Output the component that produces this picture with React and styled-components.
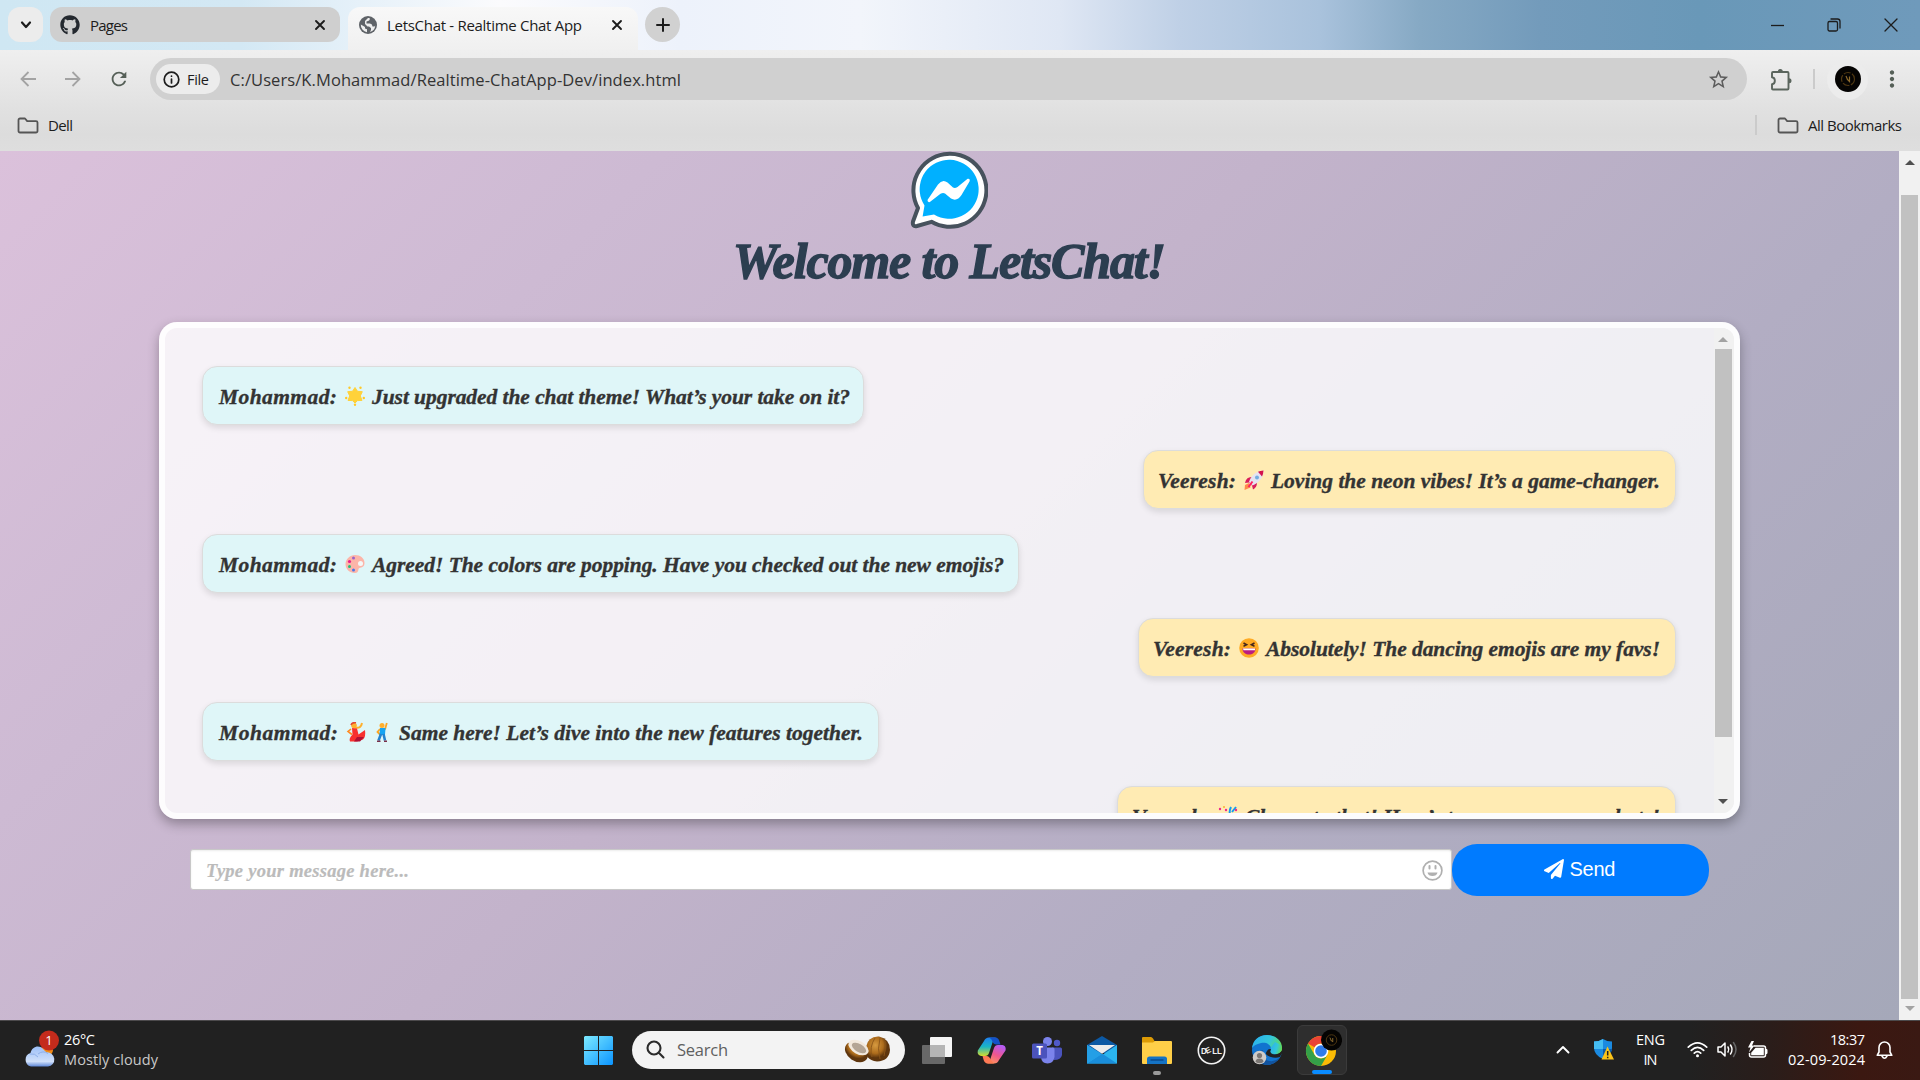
import React, { useLayoutEffect, useRef, useState } from "react";
import styled, { createGlobalStyle, css } from "styled-components";
import { FaGithub, FaPaperPlane } from "react-icons/fa";
import { MdRefresh, MdStarBorder, MdMoreVert } from "react-icons/md";

const UI = `"Open Sans", "Noto Sans", sans-serif`;
const SCRIPT = `"Liberation Serif", serif`;

const Global = createGlobalStyle`
  * { box-sizing: border-box; }
  body { margin: 0; overflow: hidden; font-family: ${UI}; color: #1f1f1f; }
  svg { display: block; flex: none; }
`;

/* ---------- fitted text ---------- */

const FitBox = styled.span`
  display: block;
  flex: none;
  width: ${(p) => p.$w}px;
  white-space: nowrap;
  text-align: left;
`;

function Fit({ w, children }) {
  const ref = useRef(null);
  const [spacing, setSpacing] = useState(0);
  useLayoutEffect(() => {
    const natural = ref.current.getBoundingClientRect().width;
    setSpacing((w - natural) / Math.max(1, String(children).length - 1));
  }, []);
  return (
    <FitBox $w={w}>
      <span ref={ref} style={{ letterSpacing: spacing }}>{children}</span>
    </FitBox>
  );
}

/* ---------- browser chrome ---------- */

const Screen = styled.div`
  width: 1920px;
  height: 1080px;
  display: flex;
  flex-direction: column;
  overflow: hidden;
`;

const TabStrip = styled.div`
  height: 50px;
  flex: none;
  display: flex;
  align-items: flex-start;
  padding: 7px 0 0 8px;
  background: linear-gradient(90deg, #cfe7f3 0, #d3e8f4 240px, #e6f1f9 360px, #fbfbfd 500px, #edf2fb 680px, #f2f5fb 860px, #dfe7f4 1060px, #bfd0e6 1180px, #a9c2dc 1320px, #86a9c4 1420px, #739bbb 1540px, #6998b8 1700px, #6f9abb 1920px);
`;

const StripButton = styled.div`
  width: 35px;
  height: 35px;
  border-radius: ${(p) => (p.$round ? "50%" : "12px")};
  background: ${(p) => (p.$round ? "#d1d1d1" : "#ececec")};
  display: flex;
  align-items: center;
  justify-content: center;
`;

const Tab = styled.div`
  display: flex;
  align-items: center;
  font-size: 15px;
  color: #1c1c1c;
  ${(p) =>
    p.$active
      ? css`
          width: 290px;
          height: 43px;
          margin: 0 7px 0 8px;
          padding: 0 15px 8px 11px;
          border-radius: 12px 12px 0 0;
          background: linear-gradient(#f8f8f8, #f0f0f0);
        `
      : css`
          width: 290px;
          height: 35px;
          margin-left: 7px;
          padding: 0 14px 0 10px;
          border-radius: 12px;
          background: #cfcfcf;
        `}
`;

const TabTitle = styled.div`
  flex: 1;
  margin-left: ${(p) => p.$gap}px;
`;

const WindowButtons = styled.div`
  margin-left: auto;
  display: flex;
  align-items: center;
  gap: 43px;
  height: 35px;
  padding-right: 22px;
`;

const Toolbar = styled.div`
  height: 58px;
  flex: none;
  display: flex;
  align-items: center;
  padding: 0 15px 0 20px;
  background: linear-gradient(#efefef, #e1e1e1);
`;

const NavIcons = styled.div`
  display: flex;
  align-items: center;
  gap: 27px;
  width: 130px;
`;

const AddressBar = styled.div`
  width: 1597px;
  height: 42px;
  border-radius: 21px;
  background: #d0d0d0;
  display: flex;
  align-items: center;
  padding: 0 17px 0 6px;
  font-size: 16.5px;
  color: #333;
`;

const FileChip = styled.div`
  width: 64px;
  height: 30px;
  border-radius: 15px;
  background: #ececec;
  display: flex;
  align-items: center;
  padding-left: 7px;
  gap: 7px;
  margin-right: 10px;
  font-size: 14.5px;
  color: #1c1c1c;
`;

const Push = styled.div`
  margin-left: auto;
`;

const Divider = styled.div`
  width: 2px;
  height: 20px;
  background: #cbcbcb;
  margin: ${(p) => p.$m};
`;

const Extensions = styled.div`
  margin: 0 18px 0 23px;
`;

const AvatarHalo = styled.div`
  width: 41px;
  height: 41px;
  border-radius: 50%;
  background: #ececec;
  display: flex;
  align-items: center;
  justify-content: center;
  margin-right: 11px;
`;

const BookmarkBar = styled.div`
  height: 43px;
  flex: none;
  display: flex;
  align-items: center;
  padding: 0 18px 9px 17px;
  background: linear-gradient(#e1e1e1, #dcdcdc 60%, #dedede);
  font-size: 15px;
  color: #1c1c1c;
`;

const Bookmark = styled.div`
  display: flex;
  align-items: center;
  gap: 9px;
`;

/* ---------- page ---------- */

const Viewport = styled.div`
  flex: 1;
  min-height: 0;
  display: flex;
`;

const Page = styled.main`
  width: 1899px;
  display: flex;
  flex-direction: column;
  align-items: center;
  background: linear-gradient(135deg, #dbc1db 0%, #cdbad3 24%, #c3b3cb 46%, #b2adc3 70%, #a5a8b9 100%);
`;

const Logo = styled.div`
  margin-right: 1px;
`;

const Heading = styled.h1`
  margin: 0;
  height: 93px;
  font: italic bold 50px/64px ${SCRIPT};
  color: #2c3e50;
  -webkit-text-stroke: 1.4px #2c3e50;
`;

const ChatBox = styled.section`
  width: 1581px;
  height: 497px;
  flex: none;
  display: flex;
  border: 6px solid rgba(255, 255, 255, 0.8);
  border-radius: 18px;
  background: rgba(255, 255, 255, 0.8);
  box-shadow: 0 5px 12px rgba(0, 0, 0, 0.3);
  overflow: hidden;
`;

const MessageList = styled.div`
  flex: 1;
  height: 485px;
  padding: 38px 38px 0 37px;
  display: flex;
  flex-direction: column;
  gap: 25px;
  overflow: hidden;
`;

const Bubble = styled.div`
  width: ${(p) => p.$w}px;
  height: 59px;
  flex: none;
  align-self: ${(p) => (p.$own ? "flex-end" : "flex-start")};
  display: flex;
  align-items: center;
  padding: 2px 0 0 ${(p) => (p.$own ? 14 : 16)}px;
  border: 1px solid #dcdcdc;
  border-radius: 15px;
  background: ${(p) => (p.$own ? "#ffebb3" : "#dff6f8")};
  box-shadow: 0 3px 6px rgba(0, 0, 0, 0.11);
  font: italic bold 21.5px/28px ${SCRIPT};
  color: #333;
  -webkit-text-stroke: 0.35px #333;
`;

const Emojis = styled.div`
  display: flex;
  gap: 6px;
  margin: 0 7px 2px 8px;
`;

const Scrollbar = styled.div`
  width: ${(p) => p.$w}px;
  flex: none;
  display: flex;
  flex-direction: column;
  align-items: center;
  padding-right: ${(p) => p.$pr || 0}px;
  background: #f1f1f1;
`;

const Arrow = styled.div`
  width: 0;
  height: 0;
  flex: none;
  border-left: 5px solid transparent;
  border-right: 5px solid transparent;
  border-${(p) => (p.$down ? "top" : "bottom")}: 5px solid ${(p) => p.$c};
  margin: ${(p) => p.$m};
`;

const Thumb = styled.div`
  width: 17px;
  height: ${(p) => p.$h}px;
  flex: none;
  background: #c1c1c1;
`;

const Composer = styled.form`
  width: 1519px;
  margin-top: 25px;
  display: flex;
  align-items: center;
`;

const InputBox = styled.div`
  width: 1262px;
  height: 41px;
  margin-bottom: 1px;
  display: flex;
  align-items: center;
  padding: 2px 8px 0 15px;
  border: 1px solid #c8c8c8;
  border-radius: 3px;
  background: #fff;
  box-shadow: inset 0 1px 2px rgba(0, 0, 0, 0.08);
  font: italic bold 18.5px/24px ${SCRIPT};
  color: #bbb;
  -webkit-text-stroke: 0.2px #bbb;
`;

const SendButton = styled.div`
  width: 257px;
  height: 52px;
  border-radius: 25px;
  background: #007bff;
  color: #fff;
  display: flex;
  align-items: center;
  justify-content: center;
  gap: 6px;
  padding: 0 2px 2px 0;
  font: 20px "Liberation Sans", sans-serif;
`;

/* ---------- taskbar ---------- */

const Taskbar = styled.footer`
  height: 60px;
  flex: none;
  display: flex;
  align-items: flex-start;
  border-top: 1px solid #4c4a4c;
  background: linear-gradient(90deg, #212121 0, #212121 1690px, #2a1d1a 1770px, #3b1811 1860px, #3a1913 1920px);
  color: #fff;
`;

const Weather = styled.div`
  width: 571px;
  height: 57px;
  display: flex;
  align-items: center;
  padding-left: 24px;
  gap: 4px;
`;

const Lines = styled.div`
  display: flex;
  flex-direction: column;
  align-items: ${(p) => p.$align || "flex-start"};
  line-height: 20px;
  margin: ${(p) => p.$m || 0};
  font-size: 14.5px;
`;

const Muted = styled.span`
  color: #c9c9c9;
`;

const Slot = styled.div`
  width: 55px;
  height: 58px;
  flex: none;
  display: flex;
  flex-direction: column;
  align-items: center;
  justify-content: center;
`;

const ActiveTile = styled.div`
  width: 50px;
  height: 50px;
  border: 1px solid #3b3b3b;
  border-radius: 6px;
  background: #2e2e2e;
  display: flex;
  flex-direction: column;
  align-items: center;
  padding-top: 2px;
`;

const Indicator = styled.div`
  width: ${(p) => p.$w}px;
  height: 4px;
  border-radius: 2px;
  background: ${(p) => p.$c};
  margin-top: ${(p) => p.$mt}px;
  margin-bottom: ${(p) => p.$mb || 0}px;
`;

const SearchBox = styled.div`
  width: 273px;
  height: 38px;
  margin: 10px 4px 0 6px;
  border-radius: 19px;
  background: #f3f3f3;
  display: flex;
  align-items: center;
  padding: 0 14px 2px 14px;
  gap: 12px;
  font-size: 16.5px;
  color: #606060;
`;

const Tray = styled.div`
  flex: 1;
  height: 57px;
  display: flex;
  align-items: center;
  padding-left: 207px;
`;

const TrayItem = styled.div`
  margin-left: ${(p) => p.$ml}px;
`;

/* ---------- icons ---------- */

const Stroke = ({ w, h, box, s = 2, c = "#1c1c1c", d, round = true }) => (
  <svg width={w} height={h} viewBox={box || `0 0 ${w} ${h}`} fill="none" stroke={c} strokeWidth={s}
    strokeLinecap={round ? "round" : "butt"} strokeLinejoin={round ? "round" : "miter"}>
    <path d={d} />
  </svg>
);

const CloseX = () => <Stroke w={12} h={12} s={1.9} d="M2 2L10 10M10 2L2 10" />;

const Globe = () => (
  <svg width="18" height="18" viewBox="0 0 18 18">
    <circle cx="9" cy="9" r="9" fill="#5f6368" />
    <path d="M1.800 8.500L6 11v1.500l2 .8v3A7.500 7.500 0 0 1 1.800 8.500zM10.500 2q1 2-1.500 3L7.500 5.500v2h3.500q2.500.5 2.500 3h2l.8-1A7.500 7.500 0 0 1 11 16l1-2v-2l-2-1.500H8.500L6 8V5l3-3z" fill="#eeeeee" />
  </svg>
);

const Folder = () => (
  <svg width="22" height="17" viewBox="0 0 22 17" fill="none" stroke="#555" strokeWidth="1.800" strokeLinejoin="round">
    <path d="M1.500 3a1.500 1.500 0 0 1 1.500-1.500h5l2.200 2.600H19A1.500 1.500 0 0 1 20.500 5.600v8.400a1.500 1.500 0 0 1-1.500 1.500H3A1.500 1.500 0 0 1 1.500 14z" />
  </svg>
);

const Puzzle = () => (
  <svg width="23" height="25" viewBox="0 0 23 25">
    <path d="M3 5h14.500a1 1 0 0 1 1 1v15.500a1 1 0 0 1-1 1H3a1 1 0 0 1-1-1v-4.200c3.800-.4 3.800-6.600 0-7V6a1 1 0 0 1 1-1z" fill="none" stroke="#5a655d" strokeWidth="1.900" strokeLinejoin="round" />
    <path d="M7.800 4.600a2.500 2.500 0 0 1 5 0zM19 11.300a2.500 2.500 0 0 1 0 5z" fill="#5a655d" />
  </svg>
);

const Avatar = ({ size }) => (
  <svg width={size} height={size} viewBox="0 0 26 26">
    <circle cx="13" cy="13" r="13" fill="#050403" />
    <circle cx="13" cy="13" r="6.500" fill="none" stroke="#4e3712" strokeWidth="1.200" strokeDasharray="7 1.500" />
    <path d="M11 10l1.500 3.500M14.500 10.500v5l-2.500-2.500" stroke="#8d6a2c" strokeWidth="1.200" fill="none" />
  </svg>
);

const MessengerLogo = () => (
  <svg width="78" height="78" viewBox="0 0 78 78">
    <path d="M8 57A36.500 36.500 0 1 1 21.500 70.800L7 75Q2 76 3 70.500Z" fill="#fff" stroke="#47525d" strokeWidth="4" strokeLinejoin="round" />
    <path d="M14.500 54.500A29.500 29.500 0 1 1 24 63.600L12.600 65.500Z" fill="#00b0ff" />
    <path d="M18.500 51C17 50 17.500 48.500 18.500 47.500L28 33.500Q32.500 27.500 37.500 31.500L43 36.500Q45 37.500 47.500 36L57 28.200C59 27.200 60.500 28.500 59.500 30.500L51.500 44Q47 51 41 47.500L35 42.500Q33 41.200 30.500 42.800L20.500 50.500Q19.500 51.500 18.500 51Z" fill="#fff" />
  </svg>
);

const emojiArt = {
  star: (
    <g fill="#ffc928">
      <path d="M10 1.500l2.500 3.800 4.800.4-2 4.200 1.700 4.500-4.500.2L10 17l-2.500-2.400-4.500-.2 1.700-4.500-2-4.200 4.800-.4z" fill="#ffd23a" stroke="#ffd23a" strokeLinejoin="round" />
      <circle cx="4.500" cy="1.800" r="1.200" /><circle cx="15.500" cy="1.800" r="1.200" />
      <circle cx="1.200" cy="12" r="1.200" /><circle cx="18.800" cy="12" r="1.200" /><circle cx="10" cy="18.800" r="1.200" />
    </g>
  ),
  palette: (
    <g>
      <path d="M10 1c5.500 0 9.500 3.500 9.500 8 0 4-3 4.500-5 5s0 5-4.500 5C4.500 19 .500 15 .500 10S5 1 10 1z" fill="#fcb5a9" />
      <circle cx="15.500" cy="9.500" r="2.500" fill="#f5f7f7" />
      <circle cx="8.500" cy="4" r="1.500" fill="#9a63c9" /><circle cx="4.500" cy="7.500" r="1.600" fill="#e91e8c" />
      <circle cx="4.500" cy="12.500" r="1.500" fill="#20c07a" /><circle cx="8.500" cy="16" r="1.500" fill="#4a76e8" />
    </g>
  ),
  rocket: (
    <g>
      <path d="M5 13l1.500 4.500L.500 20 1 15z" fill="#ff8a4c" />
      <path d="M1 13Q2 7 7.500 7l5.500 5.500q0 5-4 7l-1-4-3-3z" fill="#d81e5b" />
      <path d="M5 12C7 6 11 1.500 19.500.500 19.500 8 14 13 8.500 15.500z" fill="#e6e3f0" />
      <path d="M14 1.800q2-.8 5.500-1.300-.2 3.500-1.500 6z" fill="#d3124d" />
      <circle cx="13" cy="7.500" r="2" fill="#74aee0" /><path d="M8.500 11.500l-4 5.500" stroke="#ff2060" strokeWidth="2" />
    </g>
  ),
  laugh: (
    <g>
      <circle cx="10" cy="10" r="9.800" fill="#ffab24" />
      <path d="M4.500 5l3.200 1.800-3.200 1.500M15.500 5l-3.200 1.800 3.200 1.500" fill="none" stroke="#45271d" strokeWidth="1.500" />
      <path d="M3.500 10.500h13c0 8-13 8-13 0z" fill="#bb1d80" /><path d="M4 10.500h12v1.700H4.500z" fill="#fff" />
    </g>
  ),
  woman: (
    <g>
      <path d="M9 5.500Q15 7 16 1" stroke="#ffb02e" strokeWidth="2" fill="none" /><circle cx="8" cy="3.500" r="2.800" fill="#ffb02e" />
      <path d="M5 3q1-3 5-2.200" stroke="#e24a33" strokeWidth="1.600" fill="none" />
      <path d="M6 6l5 .5 1.500 6 6.500-4.500q1 7-2 9.500l-6 2H4q-1.500-3 2.500-7z" fill="#f8312f" /><path d="M11 15l7 0-4 4.500H8z" fill="#b01034" />
      <path d="M5 7L2 9.500l4 3" stroke="#ff8a22" strokeWidth="1.600" fill="none" />
    </g>
  ),
  man: (
    <g>
      <circle cx="10" cy="3.500" r="2.500" fill="#ffb02e" /><path d="M13 7.500l1.800-6.500M8 7l-2.500 3 2.500 2.500" stroke="#ffa51f" strokeWidth="1.800" fill="none" />
      <path d="M8 6h5.500l-.5 7H7.500z" fill="#15a4f3" /><path d="M9 12l-2.500 6.500M11.500 12l1.500 6.500" stroke="#2483cf" strokeWidth="2.600" />
      <path d="M5 19.200h3.500M12 19.200h3" stroke="#7a2f48" strokeWidth="1.400" />
    </g>
  ),
  party: (
    <g>
      <path d="M2 19L7 7l6 6z" fill="#ffb02e" /><path d="M12 8q-1-3 1-7M14 6l4-5" stroke="#139df0" strokeWidth="2" fill="none" />
      <g fill="#f0288c"><circle cx="2" cy="3" r="1.200" /><circle cx="8" cy="4" r="1.200" /><circle cx="18" cy="4" r="1.200" /></g><circle cx="6" cy="1" r="1" fill="#ffb02e" />
    </g>
  ),
};

const Emoji = ({ name }) => <svg width="20" height="20" viewBox="0 0 20 20">{emojiArt[name]}</svg>;

const SmileIcon = () => (
  <svg width="21" height="21" viewBox="0 0 21 21" fill="none" stroke="#b0b0b0">
    <circle cx="10.500" cy="10.500" r="9.400" strokeWidth="1.700" />
    <path d="M7.500 6v2.500M13.500 6v2.500" strokeWidth="2" strokeLinecap="round" />
    <path d="M5.500 12.500h10c-.5 4.800-9.500 4.800-10 0z" fill="#b0b0b0" stroke="none" />
  </svg>
);

const WeatherIcon = () => (
  <svg width="36" height="40" viewBox="0 0 36 40">
    <defs>
      <linearGradient id="cloud" x1="0" y1="0" x2="0" y2="1"><stop offset="0" stopColor="#9dc0f8" /><stop offset=".75" stopColor="#d0e0fa" /><stop offset="1" stopColor="#5f88d8" /></linearGradient>
    </defs>
    <circle cx="23" cy="20" r="6" fill="#f08a16" />
    <path d="M7 36.500a7 7 0 0 1-.5-13.500C8 16.500 15 14.500 19 19c1.500 1.500 2.500 2.500 3.500 3.400A7 7 0 0 1 24 36.500z" fill="url(#cloud)" />
    <path d="M6 24q5-1 8 3M14 24q5-4 10-.5" fill="none" stroke="#8fb0ea" strokeWidth="1" />
    <circle cx="25" cy="10.500" r="10" fill="#c42b1c" />
    <text x="25" y="15.200" fill="#fff" fontSize="13" textAnchor="middle">1</text>
  </svg>
);

const WindowsLogo = () => (
  <svg width="29" height="29" viewBox="0 0 29 29">
    <defs><linearGradient id="win" gradientUnits="userSpaceOnUse" x1="0" y1="0" x2="29" y2="29"><stop offset="0" stopColor="#7deaff" /><stop offset="1" stopColor="#0b94ff" /></linearGradient></defs>
    <path d="M1 0h13v14H0V1zM15 0h13l1 1v13H15zM0 15h14v14H1l-1-1zM15 15h14v13l-1 1H15z" fill="url(#win)" />
  </svg>
);

const Coconuts = () => (
  <svg width="47" height="28" viewBox="0 0 47 28">
    <defs>
      <radialGradient id="nut" cx=".4" cy=".35"><stop offset="0" stopColor="#d69a40" /><stop offset=".65" stopColor="#ad6c1c" /><stop offset="1" stopColor="#5e350d" /></radialGradient>
    </defs>
    <path d="M22 12Q24 1 35 1.500 46 4 46 15 45 26 33 26.500 20 25 22 12z" fill="url(#nut)" />
    <path d="M31 3q-6 9-3 19M36 3q-3 11 0 21M41 6q1 9-1 15" stroke="#8a5518" strokeWidth=".9" fill="none" />
    <ellipse cx="12.500" cy="17" rx="12.500" ry="9" transform="rotate(34 12.500 17)" fill="url(#nut)" />
    <ellipse cx="14.500" cy="12.500" rx="11" ry="6.500" transform="rotate(30 14.500 12.500)" fill="#f2e8dc" />
    <ellipse cx="15" cy="13" rx="8" ry="4" transform="rotate(30 15 13)" fill="#b4a595" />
  </svg>
);

const TaskView = () => (
  <svg width="30" height="29" viewBox="0 0 30 29">
    <rect x="8" y="1" width="22" height="20" rx="1" fill="#f5f5f5" />
    <rect x="0" y="9" width="23" height="19" rx="1" fill="#777" fillOpacity=".82" />
    <rect x="8" y="9" width="15" height="12" fill="#b5b5b5" />
  </svg>
);

const Copilot = () => (
  <svg width="29" height="27" viewBox="0 0 29 27">
    <defs>
      <linearGradient id="cpa" x1="0" y1="0" x2="0" y2="1"><stop offset="0" stopColor="#1f7ff0" /><stop offset=".5" stopColor="#1ab6c6" /><stop offset="1" stopColor="#d5dc2c" /></linearGradient>
      <linearGradient id="cpb" x1=".7" y1="0" x2=".2" y2="1"><stop offset="0" stopColor="#b55cf5" /><stop offset=".5" stopColor="#f0568e" /><stop offset="1" stopColor="#ff9a5a" /></linearGradient>
    </defs>
    <path d="M7 4q1.500-3.500 5-3.500h8q-3 0-4 3.500l-4 12q-1 3-4 3H4Q0 18 .8 13.500z" fill="url(#cpa)" />
    <path d="M12 .500h6q3.500 0 4.500 4l1 3h-4q-3 0-4-3T12 .500z" fill="#1452c8" />
    <path d="M22 23q-1.500 3.500-5 3.500H9q3 0 4-3.500l4-12q1-3 4-3h4.500q4 1 3 5.500z" fill="url(#cpb)" />
    <path d="M17 26.500h-6q-3.500 0-4.500-4l-1-3.500h4q3 0 4 3.500z" fill="#ff7a55" />
  </svg>
);

const Teams = () => (
  <svg width="30" height="27" viewBox="0 0 30 27">
    <circle cx="25" cy="6" r="3.200" fill="#5059c9" /><path d="M20 10.500h8.500a1.500 1.500 0 0 1 1.500 1.500v6q-1 5-8 5z" fill="#4a53bc" />
    <circle cx="15.500" cy="4.500" r="4.500" fill="#7b83eb" /><path d="M9 10.500h12a1.500 1.500 0 0 1 1.500 1.500v8q-1 6.500-7 6.500T9 20z" fill="#7b83eb" />
    <rect x="0" y="6.500" width="15" height="15" rx="1.500" fill="#4b53bc" />
    <text x="7.500" y="18.200" fontSize="11.500" fontWeight="bold" fill="#fff" textAnchor="middle">T</text>
  </svg>
);

const Mail = () => (
  <svg width="30" height="28" viewBox="0 0 30 28">
    <path d="M0 9L15 0l15 9v8H0z" fill="#0c59a4" />
    <path d="M0 9l15 10L30 9v18.500H0z" fill="#2bb5ee" /><path d="M0 27.500L15 17.500 30 27.500z" fill="#1a8edb" /><path d="M0 9v18.500l15-9.500z" fill="#249fe6" />
    <path d="M2 9h26L15 17.700z" fill="#ececec" />
  </svg>
);

const Explorer = () => (
  <svg width="30" height="27" viewBox="0 0 30 27">
    <path d="M0 1q0-1 1-1h8q1 0 2 1.500L12.500 4H28v6H0z" fill="#dd9b05" />
    <path d="M0 5.500h11L13 4h16q1 0 1 1v21q0 1-1 1H1q-1 0-1-1z" fill="#ffcf48" />
    <path d="M5 27v-5q0-2.500 2.500-2.500h15q2.500 0 2.500 2.500v5z" fill="#1573c4" /><path d="M8.500 23h13" stroke="#0a4a8c" strokeWidth="1.500" />
  </svg>
);

const Dell = () => (
  <svg width="29" height="29" viewBox="0 0 29 29">
    <circle cx="14.500" cy="14.500" r="13.200" fill="none" stroke="#f2f2f2" strokeWidth="1.600" />
    <text x="4" y="17.500" fontSize="8.200" fontWeight="bold" fontFamily="Liberation Sans, sans-serif" fill="#f2f2f2" textLength="21" lengthAdjust="spacingAndGlyphs">
      D<tspan rotate="-25" dy=".4">E</tspan><tspan dy="-.4">LL</tspan>
    </text>
  </svg>
);

const Edge = () => (
  <svg width="30" height="30" viewBox="0 0 30 30">
    <defs>
      <linearGradient id="ega" x1="0" y1=".3" x2="1" y2=".6"><stop offset="0" stopColor="#2bb1ee" /><stop offset=".55" stopColor="#33c7d9" /><stop offset="1" stopColor="#65db4c" /></linearGradient>
    </defs>
    <circle cx="15" cy="15" r="15" fill="#1173cf" />
    <path d="M30 12.500v6l-1.500 2-8-2 1-3z" fill="#212121" />
    <path d="M0 13C1 5 7 0 15 0c9 0 15 6 15 12.500 0 4-3 6.500-7 6.500-3.500 0-5-1.500-4.500-3 .5-1 .8-2 .5-3C18 9 14 7 9 8Q2 9.500 0 13z" fill="url(#ega)" />
    <path d="M11 15q-2 7 4.500 10.500 6 2.500 12-2.500Q23 30 14 30 5 28 6 20q1-4 5-5z" fill="#12539e" />
    <path d="M19 14q-2 5 4 5.500 4 0 7-3l-2 5.500q-5 1.500-10.500-.5T15 16q1-2.500 4-2z" fill="#212121" />
    <path d="M18.500 13q1 2 0 3.500.5 2.500 4.500 2.500 5 0 7-4l-1-5-6-3z" fill="url(#ega)" />
    <circle cx="7.500" cy="22.500" r="6.800" fill="#cfccc9" /><circle cx="7.500" cy="20.500" r="2.600" fill="#7b7774" /><path d="M3.500 27q0-3.500 4-3.500t4 3.500q-4 2.500-8 0z" fill="#7b7774" />
  </svg>
);

const Chrome = () => (
  <svg width="40" height="40" viewBox="0 0 40 40">
    <g transform="translate(4 8)">
      <circle cx="15" cy="15" r="15" fill="#fbbc05" />
      <path d="M2 7.500A15 15 0 0 1 28 7.500H15A7.500 7.500 0 0 0 8.500 11.300z" fill="#ea4335" />
      <path d="M2 7.500L8.500 18.750A7.500 7.500 0 0 0 21.500 18.750L15 30A15 15 0 0 1 2 7.500z" fill="#34a048" />
      <circle cx="15" cy="15" r="7.300" fill="#fff" /><circle cx="15" cy="15" r="5.800" fill="#2f7bea" />
    </g>
    <g transform="translate(19 1.500) scale(.81)">
      <circle cx="13" cy="13" r="13" fill="#050403" /><circle cx="13" cy="13" r="6.500" fill="none" stroke="#4e3712" strokeWidth="1.200" /><path d="M11 10l1.500 3.500M14.500 10.500v5l-2.500-2.500" stroke="#8d6a2c" strokeWidth="1.200" fill="none" />
    </g>
  </svg>
);

const Shield = () => (
  <svg width="20" height="21" viewBox="0 0 20 21">
    <path d="M9 0q4 2.500 9 2.500V9q0 7-9 11Q0 16 0 9V2.500Q5 2.500 9 0z" fill="#1b8ae0" />
    <path d="M9 0v10H0V2.500Q5 2.500 9 0z" fill="#45bdf2" /><path d="M9 10h9q-1 6-9 10z" fill="#0a5cad" />
    <path d="M13.500 7.500L20 20.500H7.500z" fill="#fcc419" /><path d="M13.700 12v4.500M13.700 17.800v1.500" stroke="#222" strokeWidth="1.500" />
  </svg>
);

const Wifi = () => (
  <svg width="21" height="17" viewBox="0 0 21 17" fill="none" stroke="#fff" strokeWidth="1.700" strokeLinecap="round">
    <path d="M1.300 6.200q9.200-8.600 18.400 0M4.300 9.300q6.200-6 12.400 0M7.300 12.200q3.200-3 6.400 0" /><circle cx="10.500" cy="14.800" r="1.500" fill="#fff" stroke="none" />
  </svg>
);

const Volume = () => (
  <svg width="21" height="17" viewBox="0 0 21 17" fill="none" stroke="#fff" strokeWidth="1.500" strokeLinecap="round" strokeLinejoin="round">
    <path d="M1 6h3l4-4v13l-4-4H1zM11 6q1.500 2.500 0 5M13.500 4q3 4.500 0 9" /><path d="M16.500 1.500q5 7 0 14" stroke="#666" />
  </svg>
);

const Battery = () => (
  <svg width="21" height="18" viewBox="0 0 21 18">
    <path d="M7 5h9.500a2 2 0 0 1 2 2v7a2 2 0 0 1-2 2h-12a2 2 0 0 1-2-2v-2" fill="none" stroke="#fff" strokeWidth="1.500" />
    <path d="M8.500 6.700h8.300v7.600H4.200v-2.500z" fill="#fff" /><path d="M18.500 8.500h1.500v4h-1.500z" fill="#fff" stroke="#fff" /><path d="M4.500 0L1 6.500h2.500L2 11.500 7.500 4.500H5L7 0z" fill="#fff" />
  </svg>
);

const messages = [
  { who: "Mohammad:", nw: 118, art: ["star"], text: "Just upgraded the chat theme! What’s your take on it?", tw: 478, w: 662 },
  { own: true, who: "Veeresh:", nw: 78, art: ["rocket"], text: "Loving the neon vibes! It’s a game-changer.", tw: 389, w: 533 },
  { who: "Mohammad:", nw: 118, art: ["palette"], text: "Agreed! The colors are popping. Have you checked out the new emojis?", tw: 632, w: 817 },
  { own: true, who: "Veeresh:", nw: 78, art: ["laugh"], text: "Absolutely! The dancing emojis are my favs!", tw: 394, w: 538 },
  { who: "Mohammad:", nw: 119, art: ["woman", "man"], text: "Same here! Let’s dive into the new features together.", tw: 464, w: 677 },
  { own: true, who: "Veeresh:", nw: 78, art: ["party"], text: "Cheers to that! Here’s to more awesome chats!", tw: 415, w: 559 },
];

export default function App() {
  return (
    <Screen>
      <Global />
      <TabStrip>
        <StripButton><Stroke w={12} h={10} s={2.2} d="M2 2.500L6 7L10 2.500" /></StripButton>
        <Tab>
          <FaGithub size={20} color="#24292f" />
          <TabTitle $gap={10}><Fit w={38}>Pages</Fit></TabTitle>
          <CloseX />
        </Tab>
        <Tab $active>
          <Globe />
          <TabTitle $gap={10}><Fit w={195}>LetsChat - Realtime Chat App</Fit></TabTitle>
          <CloseX />
        </Tab>
        <StripButton $round><Stroke w={14} h={14} s={2} d="M7 1V13M1 7H13" /></StripButton>
        <WindowButtons>
          <Stroke w={13} h={12} s={1.3} round={false} d="M0 6.500H13" />
          <Stroke w={14} h={14} s={1.3} d="M1 5a1.500 1.500 0 0 1 1.500-1.500H9A1.500 1.500 0 0 1 10.500 5v6.500A1.500 1.500 0 0 1 9 13H2.500A1.500 1.500 0 0 1 1 11.500zM4 1h6.500Q13 1 13 3.500V10" />
          <Stroke w={14} h={14} s={1.3} d="M1 1L13 13M13 1L1 13" />
        </WindowButtons>
      </TabStrip>

      <Toolbar>
        <NavIcons>
          <Stroke w={17} h={16} s={1.8} c="#a3a3a3" round={false} d="M16 8H2M8.500 1L1.500 8L8.500 15" />
          <Stroke w={17} h={16} s={1.8} c="#a3a3a3" round={false} d="M1 8H15M8.500 1L15.500 8L8.500 15" />
          <MdRefresh size={22} color="#555f57" />
        </NavIcons>
        <AddressBar>
          <FileChip>
            <Stroke w={17} h={17} s={1.7} d="M8.500 1.200a7.300 7.300 0 1 1 0 14.600a7.300 7.300 0 1 1 0-14.600M8.500 8V12M8.500 5V5.200" />
            <Fit w={22}>File</Fit>
          </FileChip>
          <Fit w={451}>C:/Users/K.Mohammad/Realtime-ChatApp-Dev/index.html</Fit>
          <Push><MdStarBorder size={23} color="#5c5c5c" /></Push>
        </AddressBar>
        <Extensions><Puzzle /></Extensions>
        <Divider $m="0 12px 0 2px" />
        <AvatarHalo><Avatar size={26} /></AvatarHalo>
        <MdMoreVert size={26} color="#555f57" />
      </Toolbar>

      <BookmarkBar>
        <Bookmark><Folder /><Fit w={25}>Dell</Fit></Bookmark>
        <Divider $m="0 20px 0 auto" />
        <Bookmark><Folder /><Fit w={94}>All Bookmarks</Fit></Bookmark>
      </BookmarkBar>

      <Viewport>
        <Page>
          <Logo><MessengerLogo /></Logo>
          <Heading><Fit w={433}>Welcome to LetsChat!</Fit></Heading>
          <ChatBox>
            <MessageList>
              {messages.map((m) => (
                <Bubble key={m.text} $own={m.own} $w={m.w}>
                  <Fit w={m.nw}>{m.who}</Fit>
                  <Emojis>{m.art.map((a) => <Emoji key={a} name={a} />)}</Emojis>
                  <Fit w={m.tw}>{m.text}</Fit>
                </Bubble>
              ))}
            </MessageList>
            <Scrollbar $w={20} $pr={2}>
              <Arrow $c="#a3a3a3" $m="9px 0 7px" />
              <Thumb $h={388} />
              <Arrow $down $c="#505050" $m="auto 0 9px" />
            </Scrollbar>
          </ChatBox>
          <Composer>
            <InputBox>
              <Fit w={203}>Type your message here...</Fit>
              <Push><SmileIcon /></Push>
            </InputBox>
            <SendButton><FaPaperPlane size={20} /><Fit w={46}>Send</Fit></SendButton>
          </Composer>
        </Page>
        <Scrollbar $w={21}>
          <Arrow $c="#505050" $m="9px 0 30px" />
          <Thumb $h={804} />
          <Arrow $down $c="#a3a3a3" $m="auto 0 9px" />
        </Scrollbar>
      </Viewport>

      <Taskbar>
        <Weather>
          <WeatherIcon />
          <Lines>
            <Fit w={31}>26°C</Fit>
            <Muted><Fit w={94}>Mostly cloudy</Fit></Muted>
          </Lines>
        </Weather>
        <Slot><WindowsLogo /></Slot>
        <SearchBox>
          <Stroke w={19} h={19} s={2.1} c="#2b2b2b" d="M8 1.500a6.500 6.500 0 1 1 0 13a6.500 6.500 0 1 1 0-13M12.800 12.800L17.500 17.500" />
          <Fit w={51}>Search</Fit>
          <Push><Coconuts /></Push>
        </SearchBox>
        <Slot><TaskView /></Slot>
        <Slot><Copilot /></Slot>
        <Slot><Teams /></Slot>
        <Slot><Mail /></Slot>
        <Slot><Indicator $w={8} $c="transparent" $mt={0} $mb={7} /><Explorer /><Indicator $w={8} $c="#9a9a9a" $mt={7} /></Slot>
        <Slot><Dell /></Slot>
        <Slot><Edge /></Slot>
        <Slot>
          <ActiveTile><Chrome /><Indicator $w={20} $c="#0a8cff" $mt={2} /></ActiveTile>
        </Slot>
        <Tray>
          <TrayItem $ml={0}><Stroke w={14} h={9} s={1.9} c="#fff" d="M1.500 7.500L7 2L12.500 7.500" /></TrayItem>
          <TrayItem $ml={24}><Shield /></TrayItem>
          <Lines $align="center" $m="0 0 0 22px"><Fit w={29}>ENG</Fit><Fit w={14}>IN</Fit></Lines>
          <TrayItem $ml={22}><Wifi /></TrayItem>
          <TrayItem $ml={9}><Volume /></TrayItem>
          <TrayItem $ml={9}><Battery /></TrayItem>
          <Lines $align="flex-end" $m="0 0 0 20px"><Fit w={35}>18:37</Fit><Fit w={77}>02-09-2024</Fit></Lines>
          <TrayItem $ml={11}>
            <Stroke w={17} h={20} s={1.6} c="#fff" d="M1.200 15.300L3 12V7.500a5.500 5.500 0 0 1 11 0V12l1.800 3.300zM6 16q2.500 4.500 5 0" />
          </TrayItem>
        </Tray>
      </Taskbar>
    </Screen>
  );
}
